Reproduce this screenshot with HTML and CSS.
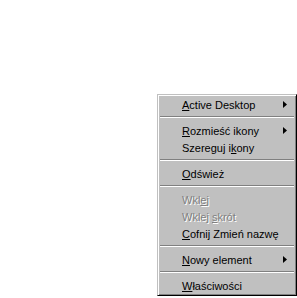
FILE: index.html
```html
<!DOCTYPE html>
<html lang="pl">
<head>
  <meta charset="UTF-8">
  <meta name="viewport" content="width=device-width, initial-scale=1.0">
  <title>Menu pulpitu</title>
  <link rel="stylesheet" href="styles.css">
</head>
<body>
  <div class="desktop">
    <div class="menu">
      <div class="item sub"><span><u>A</u>ctive Desktop</span><svg class="arrow" width="4" height="7" viewBox="0 0 4 7"><polygon points="0,0 4,3.5 0,7" fill="#000"/></svg></div>
      <div class="sep"></div>
      <div class="item sub"><span><u>R</u>ozmieść ikony</span><svg class="arrow" width="4" height="7" viewBox="0 0 4 7"><polygon points="0,0 4,3.5 0,7" fill="#000"/></svg></div>
      <div class="item"><span>Szereguj i<u>k</u>ony</span></div>
      <div class="sep"></div>
      <div class="item"><span><u>O</u>dśwież</span></div>
      <div class="sep"></div>
      <div class="item off"><span>Wkl<u>e</u>j</span></div>
      <div class="item off"><span>Wklej <u>s</u>krót</span></div>
      <div class="item"><span><u>C</u>ofnij Zmień nazwę</span></div>
      <div class="sep"></div>
      <div class="item sub"><span><u>N</u>owy element</span><svg class="arrow" width="4" height="7" viewBox="0 0 4 7"><polygon points="0,0 4,3.5 0,7" fill="#000"/></svg></div>
      <div class="sep"></div>
      <div class="item"><span><u>W</u>łaściwości</span></div>
    </div>
  </div>
</body>
</html>
```

FILE: styles.css
```css
* { box-sizing: border-box; }
body {
  margin: 0;
  background: #fff;
  font-family: 'Liberation Sans', Arial, sans-serif;
  font-size: 11px;
  color: #000;
}
.desktop { position: relative; width: 297px; height: 298px; overflow: hidden; }
.menu {
  position: absolute;
  left: 157px;
  top: 94px;
  width: 140px;
  padding: 1px;
  background: #c0c0c0;
  border: 1px solid;
  border-color: #c0c0c0 #000 #000 #c0c0c0;
  box-shadow: inset 1px 1px #fff, inset -1px -1px #808080;
}
.item {
  height: 17px;
  display: flex;
  align-items: center;
  justify-content: space-between;
  padding: 0 8px 0 23px;
  white-space: nowrap;
}
.item u { text-decoration: underline; text-underline-offset: 1px; }
.item.off { color: #808080; text-shadow: 1px 1px 0 #fff; }
.arrow { display: block; }
.sep {
  height: 2px;
  margin: 3px 1px 4px 1px;
  border-top: 1px solid #808080;
  border-bottom: 1px solid #fff;
}
```
